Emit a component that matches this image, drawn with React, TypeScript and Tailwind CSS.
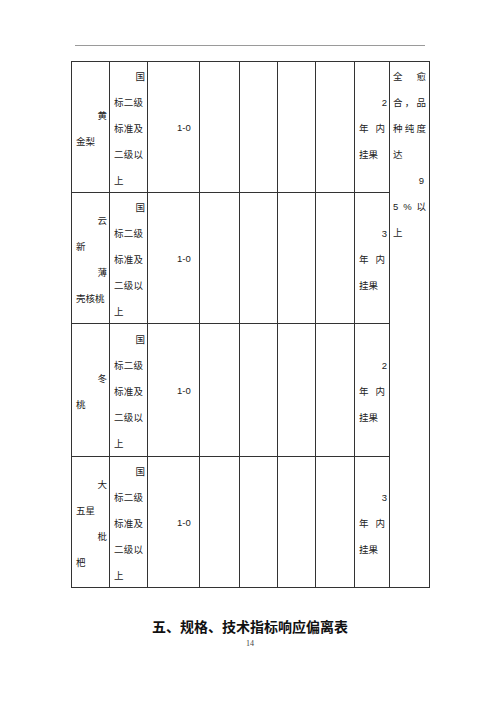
import React from "react";

type Align = "l" | "r" | "j";
type Line = { t: string; a: Align };

const FONT = { fontFamily: '"Liberation Sans", "Noto Sans CJK SC", sans-serif' } as React.CSSProperties;

function Lines({ lines, pl, pr, prr }: { lines: Line[]; pl: string; pr: string; prr: string }) {
  return (
    <div className="flex flex-col">
      {lines.map((ln, i) => {
        const cls =
          ln.a === "r"
            ? `justify-end ${prr}`
            : ln.a === "j"
            ? `justify-between ${pl} ${pr}`
            : `justify-start ${pl}`;
        const parts = ln.a === "j" ? Array.from(ln.t.replace(/ /g, "")) : [ln.t];
        return (
          <div key={i} className={`flex h-[26px] items-center pt-[3px] leading-[16px] ${cls}`}>
            {parts.map((p, k) => (
              <span key={k}>{p}</span>
            ))}
          </div>
        );
      })}
    </div>
  );
}

const grade: Line[] = [
  { t: "国", a: "r" },
  { t: "标二级", a: "j" },
  { t: "标准及", a: "j" },
  { t: "二级以", a: "j" },
  { t: "上", a: "l" },
];

const rows: { name: Line[]; years: Line[]; h: string }[] = [
  {
    name: [
      { t: "黄", a: "r" },
      { t: "金梨", a: "l" },
    ],
    years: [
      { t: "2", a: "r" },
      { t: "年内", a: "j" },
      { t: "挂果", a: "l" },
    ],
    h: "h-[131px]",
  },
  {
    name: [
      { t: "云", a: "r" },
      { t: "新", a: "l" },
      { t: "薄", a: "r" },
      { t: "壳核桃", a: "l" },
    ],
    years: [
      { t: "3", a: "r" },
      { t: "年内", a: "j" },
      { t: "挂果", a: "l" },
    ],
    h: "h-[131px]",
  },
  {
    name: [
      { t: "冬", a: "r" },
      { t: "桃", a: "l" },
    ],
    years: [
      { t: "2", a: "r" },
      { t: "年内", a: "j" },
      { t: "挂果", a: "l" },
    ],
    h: "h-[133px]",
  },
  {
    name: [
      { t: "大", a: "r" },
      { t: "五星", a: "l" },
      { t: "枇", a: "r" },
      { t: "杷", a: "l" },
    ],
    years: [
      { t: "3", a: "r" },
      { t: "年内", a: "j" },
      { t: "挂果", a: "l" },
    ],
    h: "h-[131px]",
  },
];

const note: Line[] = [
  { t: "全愈", a: "j" },
  { t: "合，品", a: "j" },
  { t: "种纯度", a: "j" },
  { t: "达", a: "l" },
  { t: "9", a: "r" },
  { t: "5%以", a: "j" },
  { t: "上", a: "l" },
];

const td = "border border-[#333] p-0 align-middle";

export default function App() {
  return (
    <div className="w-[500px] h-[706px] bg-white text-[#222] pt-[45px]" style={FONT}>
      <div className="mx-[75px] h-px bg-[#9a9a9a]" />
      <table className="mt-[15px] ml-[71px] w-[358px] table-fixed border-collapse text-[9.5px]">
        <colgroup>
          <col className="w-[38px]" />
          <col className="w-[38px]" />
          <col className="w-[52px]" />
          <col className="w-[40px]" />
          <col className="w-[38px]" />
          <col className="w-[38px]" />
          <col className="w-[39px]" />
          <col className="w-[35px]" />
          <col className="w-[40px]" />
        </colgroup>
        <tbody>
          {rows.map((r, i) => (
            <tr key={i}>
              <td className={`${td} ${r.h}`}>
                <Lines lines={r.name} pl="pl-[4px]" pr="pr-[2px]" prr="pr-[2px]" />
              </td>
              <td className={td}>
                <Lines lines={grade} pl="pl-[4px]" pr="pr-[4px]" prr="pr-[2px]" />
              </td>
              <td className={td}>
                <div className="pl-[29px] pt-[3px]">1-0</div>
              </td>
              <td className={td}></td>
              <td className={td}></td>
              <td className={td}></td>
              <td className={td}></td>
              <td className={td}>
                <Lines lines={r.years} pl="pl-[4px]" pr="pr-[4px]" prr="pr-[2px]" />
              </td>
              {i === 0 && (
                <td rowSpan={4} className="border border-[#333] p-0 align-top">
                  <Lines lines={note} pl="pl-[3px]" pr="pr-[3px]" prr="pr-[5px]" />
                </td>
              )}
            </tr>
          ))}
        </tbody>
      </table>
      <div
        className="mt-[28px] text-center text-[14px] leading-[20px] font-bold text-[#111]"
        style={{ fontFamily: '"Noto Sans CJK SC", sans-serif' }}
      >
        五、规格、技术指标响应偏离表
      </div>
      <div
        className="mt-[3px] text-center text-[8px] leading-[10px] text-[#444]"
        style={{ fontFamily: '"Liberation Serif", serif' }}
      >
        14
      </div>
    </div>
  );
}
